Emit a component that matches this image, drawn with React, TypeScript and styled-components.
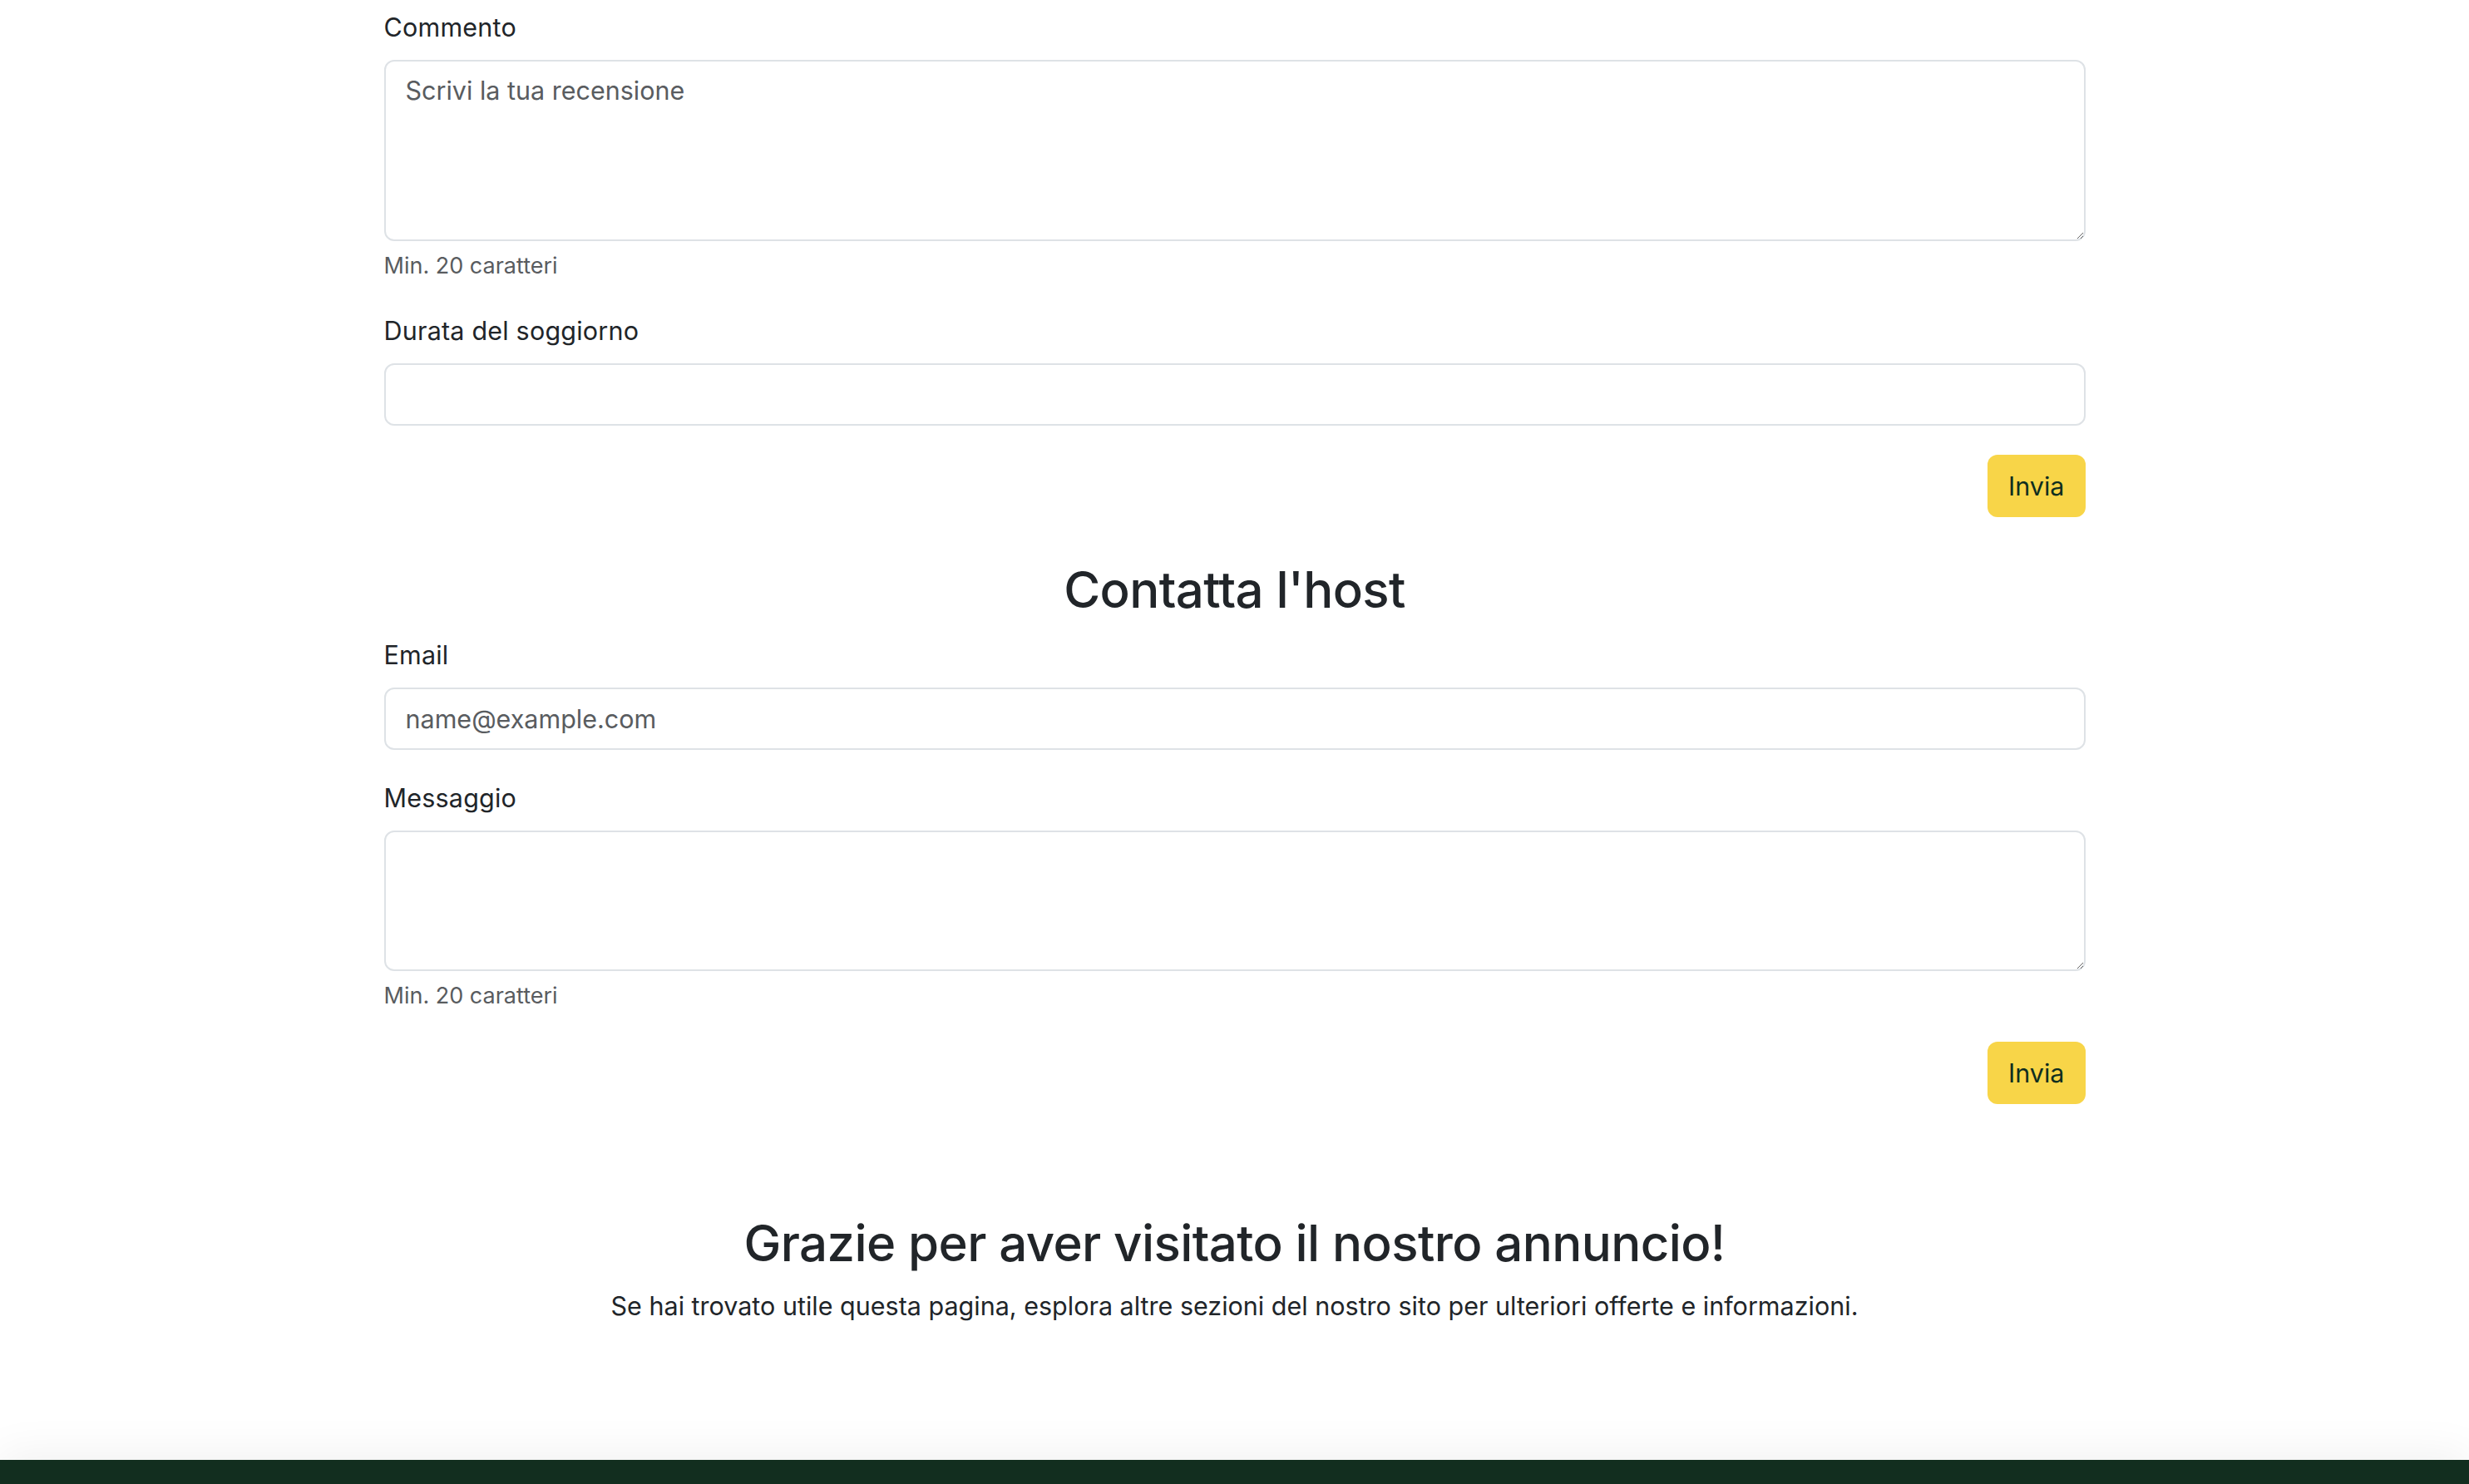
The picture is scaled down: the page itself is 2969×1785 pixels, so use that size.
import React from "react";
import styled, {createGlobalStyle} from "styled-components";

const GlobalStyle = createGlobalStyle`
  *, *::before, *::after {
    box-sizing: border-box;
  }
  html, body {
    margin: 0;
    padding: 0;
    background: #ffffff;
  }
  body {
    font-family: Inter, "Noto Sans", "Liberation Sans", sans-serif;
    color: #212529;
    font-size: 30.5px;
    line-height: 46px;
    overflow: hidden;
  }
`;

const Page = styled.div`
  min-height: 1785px;
  display: flex;
  flex-direction: column;
`;

const Container = styled.main`
  width: 2046px;
  margin: 0 auto;
  padding-top: 10px;
`;

const Form = styled.form`
  display: flex;
  flex-direction: column;
`;

const Field = styled.div`
  margin-bottom: 35px;
`;

const Label = styled.label`
  display: block;
  margin-bottom: 16px;
  font-size: 30.5px;
  line-height: 46px;
  letter-spacing: 0.2px;
`;

const TextInput = styled.input`
  display: block;
  width: 100%;
  height: 75px;
  padding: 0 24px;
  border: 2px solid #dee2e6;
  border-radius: 12px;
  background: #fff;
  font: inherit;
  color: #212529;
  outline: none;

  &::placeholder {
    color: #595c5f;
  }
`;

const TextArea = styled.textarea<{ $height: number }>`
  display: block;
  width: 100%;
  height: ${(props) => props.$height}px;
  padding: 12px 24px;
  border: 2px solid #dee2e6;
  border-radius: 12px;
  background: #fff;
  font: inherit;
  color: #212529;
  resize: vertical;
  outline: none;

  &::placeholder {
    color: #595c5f;
  }
`;

const Hint = styled.div`
  margin-top: 10px;
  font-size: 27px;
  line-height: 40px;
  color: #595c5f;
`;

const Actions = styled.div`
  display: flex;
  justify-content: flex-end;
`;

const SubmitButton = styled.button`
  height: 75px;
  padding: 0 25px;
  border: none;
  border-radius: 12px;
  background: #f8d548;
  color: #0f2e1f;
  font-family: inherit;
  font-size: 30.5px;
  line-height: 46px;
  cursor: pointer;
`;

const Heading = styled.h2<{ $top: number; $bottom: number }>`
  margin: ${(props) => props.$top}px 0 ${(props) => props.$bottom}px;
  font-size: 60px;
  line-height: 74px;
  font-weight: 500;
  letter-spacing: -0.6px;
  text-align: center;
  color: #212529;
`;

const Closing = styled.section`
  text-align: center;
`;

const Lead = styled.p`
  margin: 0;
  font-size: 30.5px;
  line-height: 46px;
`;

const Footer = styled.footer`
  margin-top: 162px;
  height: 300px;
  background: #122e1f;
  box-shadow: 0 -8px 50px rgba(0, 0, 0, 0.06);
`;

export default function App() {
  return (
    <Page>
      <GlobalStyle/>
      <Container>
        {/* recensione */}
        <Form onSubmit={(e) => e.preventDefault()}>
          <Field>
            <Label htmlFor="commento">Commento</Label>
            <TextArea id="commento" $height={218} placeholder="Scrivi la tua recensione"/>
            <Hint>Min. 20 caratteri</Hint>
          </Field>
          <Field>
            <Label htmlFor="durata">Durata del soggiorno</Label>
            <TextInput id="durata" type="text"/>
          </Field>
          <Actions>
            <SubmitButton type="submit">Invia</SubmitButton>
          </Actions>
        </Form>

        <Heading $top={50} $bottom={19}>Contatta l'host</Heading>
        <Form onSubmit={(e) => e.preventDefault()}>
          <Field>
            <Label htmlFor="email">Email</Label>
            <TextInput id="email" type="email" placeholder="name@example.com"/>
          </Field>
          <Field>
            <Label htmlFor="messaggio">Messaggio</Label>
            <TextArea id="messaggio" $height={169}/>
            <Hint>Min. 20 caratteri</Hint>
          </Field>
          <Actions>
            <SubmitButton type="submit">Invia</SubmitButton>
          </Actions>
        </Form>

        <Closing>
          <Heading $top={130} $bottom={16}>Grazie per aver visitato il nostro annuncio!</Heading>
          <Lead>
            Se hai trovato utile questa pagina, esplora altre sezioni del nostro sito per ulteriori offerte e informazioni.
          </Lead>
        </Closing>
      </Container>
      <Footer/>
    </Page>
  );
}
